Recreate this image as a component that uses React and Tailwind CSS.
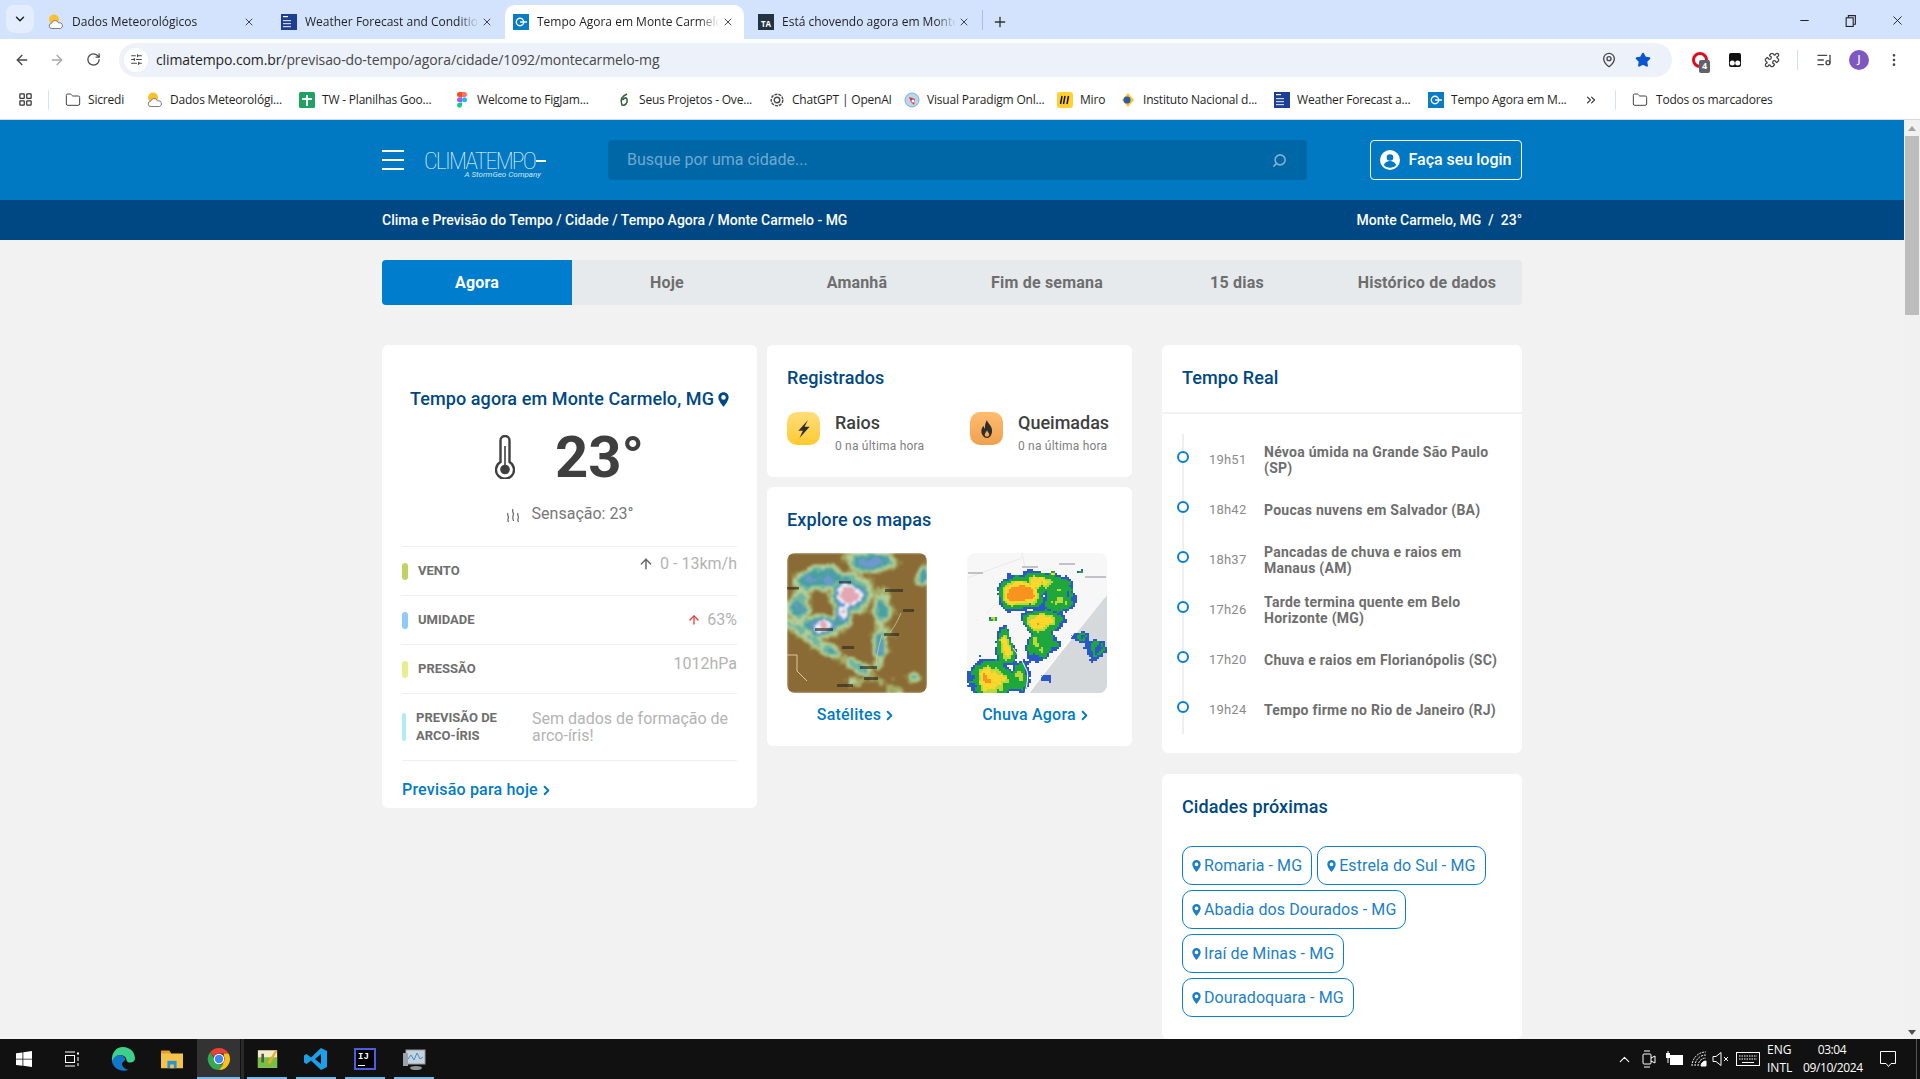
import React from "react";
import {
  ArrowLeft, ArrowRight, RotateCw, X, Plus, Minus, ChevronDown, ChevronRight, ChevronUp, LayoutGrid, Folder,
  ChevronsRight, MapPin, Star, Puzzle, ListMusic, EllipsisVertical, SlidersHorizontal, Search, ArrowUp,
} from "lucide-react";

/* ---------- map drawings ---------- */
function hash(x, y, s) {
  const v = Math.sin(x * 127.1 + y * 311.7 + s * 74.7) * 43758.5453;
  return v - Math.floor(v);
}
function smooth(x, y, s) {
  const xi = Math.floor(x), yi = Math.floor(y);
  const fx = x - xi, fy = y - yi;
  const u = fx * fx * (3 - 2 * fx), v = fy * fy * (3 - 2 * fy);
  const a = hash(xi, yi, s), b = hash(xi + 1, yi, s), c = hash(xi, yi + 1, s), d = hash(xi + 1, yi + 1, s);
  return a + (b - a) * u + (c - a) * v + (a - b - c + d) * u * v;
}
const fbm = (x, y, s) => 0.55 * smooth(x / 14, y / 14, s) + 0.3 * smooth(x / 7, y / 7, s + 1) + 0.15 * smooth(x / 3, y / 3, s + 2);
const gauss = (x, y, cx, cy, rx, ry, a) => a * Math.exp(-(((x - cx) / rx) ** 2 + ((y - cy) / ry) ** 2));

function satColor(v) {
  if (v < 0.3) return "#8a6a34";
  if (v < 0.38) return "#93803f";
  if (v < 0.47) return "#a5ac69";
  if (v < 0.58) return "#b4cd94";
  if (v < 0.68) return "#6fb7a0";
  if (v < 0.8) return "#4a9fa2";
  if (v < 0.92) return "#6f97cf";
  if (v < 1.06) return "#e8eef5";
  return "#e3a7b4";
}
const satCells = [];
for (let y = 0; y < 70; y++) {
  for (let x = 0; x < 70; x++) {
    const px = x * 2, py = y * 2;
    let v = 0;
    v = Math.max(v, gauss(px, py, 62, 42, 22, 24, 1.05));
    v = Math.max(v, gauss(px, py, 55, 62, 12, 18, 1.05));
    v = Math.max(v, gauss(px, py, 35, 72, 22, 14, 0.95));
    v = Math.max(v, gauss(px, py, 32, 25, 34, 16, 0.85));
    v = Math.max(v, gauss(px, py, 85, 8, 30, 12, 0.85));
    v = Math.max(v, gauss(px, py, 92, 60, 14, 26, 0.62));
    v = Math.max(v, gauss(px, py, 92, 95, 8, 26, 0.7));
    v = Math.max(v, gauss(px, py, 10, 50, 18, 26, 0.62));
    v = Math.max(v, gauss(px, py, 136, 22, 8, 12, 0.85));
    const d = (py - px * 0.62 - 70) / 10;
    v = Math.max(v, 0.52 * Math.exp(-d * d) * (px < 125 ? 1 : 0.6));
    const d2 = (py - 120 + px * 0.1 - 15) / 9;
    v = Math.max(v, 0.45 * Math.exp(-d2 * d2) * (px > 60 ? 1 : 0));
    v = v + (fbm(px, py, 3) - 0.5) * 0.75;
    satCells.push(<rect key={x + "-" + y} x={px} y={py} width="2.2" height="2.2" fill={satColor(v)} />);
  }
}
function radarColor(v) {
  if (v < 0.3) return null;
  if (v < 0.4) return "#2c57c9";
  if (v < 0.62) return "#1ea83c";
  if (v < 0.72) return "#b9d83a";
  if (v < 0.92) return "#ffd62b";
  return "#f7931e";
}
const radarCells = [];
for (let y = 0; y < 70; y++) {
  for (let x = 0; x < 70; x++) {
    const px = x * 2, py = y * 2;
    let v = 0;
    v = Math.max(v, gauss(px, py, 52, 40, 24, 16, 1.15));
    v = Math.max(v, gauss(px, py, 90, 42, 20, 22, 0.66));
    v = Math.max(v, gauss(px, py, 72, 30, 22, 13, 0.8));
    v = Math.max(v, gauss(px, py, 72, 68, 26, 14, 0.86));
    v = Math.max(v, gauss(px, py, 72, 90, 22, 18, 0.62));
    v = Math.max(v, gauss(px, py, 38, 92, 12, 20, 0.85));
    v = Math.max(v, gauss(px, py, 24, 125, 22, 20, 0.95));
    v = Math.max(v, gauss(px, py, 52, 122, 12, 18, 0.62));
    v = Math.max(v, gauss(px, py, 80, 125, 12, 10, 0.42));
    v = Math.max(v, gauss(px, py, 112, 82, 20, 8, 0.42));
    v = Math.max(v, gauss(px, py, 130, 95, 16, 14, 0.5));
    v = Math.max(v, gauss(px, py, 85, 20, 3, 3, 0.9));
    v = Math.max(v, gauss(px, py, 112, 18, 5, 3, 0.4));
    v = Math.max(v, gauss(px, py, 25, 65, 6, 3, 0.9));
    v = Math.max(v, gauss(px, py, 12, 100, 6, 8, 0.34));
    v -= gauss(px, py, 50, 80, 8, 12, 0.9);
    v -= gauss(px, py, 10, 60, 16, 30, 0.6);
    v += (fbm(px * 1.7, py * 1.7, 9) - 0.5) * 0.42;
    const sea = py > 140 - (px - 60) * 1.25;
    if (sea && v > 0.5) v = 0.38;
    const c = radarColor(v);
    if (c) radarCells.push(<rect key={x + "-" + y} x={px} y={py} width="2" height="2" fill={c} />);
  }
}

function SatelliteMap() {
  return (
    <svg viewBox="0 0 140 140" className="block h-[140px] w-[140px] rounded-lg">
      <filter id="satblur"><feGaussianBlur stdDeviation="0.9" /></filter>
      <g filter="url(#satblur)">{satCells}</g>
      <path d="M0 102 L10 102 L10 118 L20 128" fill="none" stroke="#e4c79a" strokeWidth="1" />
      <path d="M114 60 Q108 75 98 85 M95 82 Q88 105 90 112" fill="none" stroke="#d9d3a4" strokeWidth="1" opacity=".7" />
      <g fill="#2c2a20" opacity=".65">
        <rect x="52" y="28" width="12" height="2.5" />
        <rect x="98" y="36" width="18" height="3" />
        <rect x="116" y="56" width="11" height="3" />
        <rect x="28" y="75" width="18" height="3" />
        <rect x="97" y="80" width="15" height="3" />
        <rect x="55" y="93" width="12" height="3" />
        <rect x="73" y="113" width="17" height="3" />
        <rect x="77" y="124" width="14" height="3" />
        <rect x="50" y="131" width="16" height="3" />
        <rect x="0" y="34" width="12" height="2.5" />
      </g>
    </svg>
  );
}
function RadarMap() {
  return (
    <svg viewBox="0 0 140 140" className="block h-[140px] w-[140px] rounded-lg">
      <rect width="140" height="140" fill="#f8f7f7" />
      <path d="M140 42 L62 140 L140 140 Z" fill="#d5d9dc" />
      <path d="M0 25 L55 5 M55 0 L58 14 M20 60 L45 35" fill="none" stroke="#efe6e6" strokeWidth="1" />
      {radarCells}
      <path d="M46 95 Q55 105 60 118 Q62 125 58 140 M85 110 L110 76 M62 140 L100 90" fill="none" stroke="#fff" strokeWidth="1" />
      <g fill="#a9adb2" opacity=".7">
        <rect x="92" y="10" width="16" height="2" />
        <rect x="118" y="23" width="21" height="2" />
        <rect x="1" y="19" width="15" height="2" />
        <rect x="55" y="13" width="16" height="2" />
      </g>
    </svg>
  );
}

/* ---------- small icons ---------- */
const Pin = ({ className }) => (
  <svg viewBox="0 0 12 16" className={className} fill="currentColor">
    <path fillRule="evenodd" d="M6 0C2.7 0 .4 2.4.4 5.5.4 9 4 13.5 6 16c2-2.5 5.6-7 5.6-10.5C11.6 2.4 9.3 0 6 0zm0 3.2a2.5 2.5 0 1 1 0 5 2.5 2.5 0 0 1 0-5z" />
  </svg>
);
const Weather = ({ className = "h-4 w-4" }) => (
  <svg viewBox="0 0 16 16" className={className}>
    <rect width="16" height="16" fill="#1c3f94" />
    <rect x="2" y="2" width="5" height="1.2" fill="#fff" />
    <rect x="2" y="6" width="8" height="1.2" fill="#cdd6ee" />
    <rect x="2" y="9" width="8" height="1.2" fill="#cdd6ee" />
    <rect x="2" y="12" width="8" height="1.2" fill="#cdd6ee" />
  </svg>
);
const Climate = ({ className = "h-4 w-4" }) => (
  <svg viewBox="0 0 16 16" className={className}>
    <rect width="16" height="16" fill="#0a7cc4" />
    <circle cx="7" cy="8" r="3.7" fill="none" stroke="#fff" strokeWidth="1.4" />
    <path d="M7 8h7" stroke="#fff" strokeWidth="1.4" />
  </svg>
);
const SunCloud = () => (
  <svg viewBox="0 0 16 16" className="h-4 w-4">
    <circle cx="6" cy="5.5" r="5" fill="#fbc02d" />
    <path d="M4 14.5a2.6 2.6 0 0 1-.4-5.2 3.6 3.6 0 0 1 6.9-.4A2.9 2.9 0 0 1 12.500 14.500z" fill="#fff" stroke="#7d7d7d" strokeWidth="1" />
  </svg>
);
const TA = () => (
  <span className="flex h-4 w-4 items-center justify-center bg-[#243342] pt-1 text-[8px] font-bold leading-none text-white">TA</span>
);
const Sheets = () => (
  <svg viewBox="0 0 16 16" className="h-4 w-4">
    <rect width="16" height="16" rx="1.500" fill="#1ea362" />
    <path d="M7 3h2v3h4v2H9v6H7V8H3V6h4z" fill="#fff" />
  </svg>
);
const Figma = () => (
  <svg viewBox="0 0 10 16" className="h-4 w-[10px]">
    <path d="M5 0H2.500a2.500 2.500 0 0 0 0 5H5z" fill="#f24e1e" />
    <path d="M5 0h2.500a2.500 2.500 0 0 1 0 5H5z" fill="#ff7262" />
    <path d="M5 5.300H2.500a2.500 2.500 0 0 0 0 5H5z" fill="#a259ff" />
    <circle cx="7.500" cy="7.800" r="2.500" fill="#1abcfe" />
    <path d="M2.500 10.700H5v2.600a2.500 2.500 0 1 1-2.500-2.600z" fill="#0acf83" />
  </svg>
);
const Leaf = () => (
  <svg viewBox="0 0 16 16" className="h-4 w-4" fill="none" stroke="#35633a" strokeWidth="1.6">
    <path d="M11 2C6 4 4 8 6 13c3 1 6-2 5-6-1-2-3-1-4 1" />
  </svg>
);
const OpenAI = () => (
  <svg viewBox="0 0 16 16" className="h-4 w-4" fill="none" stroke="#4a4a4a" strokeWidth="1.4">
    <circle cx="8" cy="8" r="5.800" strokeDasharray="3 1" />
    <circle cx="8" cy="8" r="2.800" />
  </svg>
);
const Paradigm = () => (
  <svg viewBox="0 0 16 16" className="h-4 w-4">
    <circle cx="8" cy="8" r="7" fill="#b6d7ee" stroke="#8fa9c0" />
    <path d="M5 5l6 2-1 6-3-3z" fill="#d92f36" />
    <circle cx="9" cy="9" r="1.500" fill="#fff" />
  </svg>
);
const Miro = () => (
  <span className="flex h-4 w-4 items-center justify-center rounded-[3px] bg-[#ffd02f]">
    <svg viewBox="0 0 12 12" className="h-3 w-3" fill="none" stroke="#111" strokeWidth="1.500">
      <path d="M3 2L1.500 10M6 2L4.500 10M9.500 2L8 10" />
    </svg>
  </span>
);
const Inpe = () => (
  <svg viewBox="0 0 16 16" className="h-4 w-4">
    <path d="M8 1l6 7-6 7-6-7z" fill="#f4c531" />
    <circle cx="7" cy="8" r="3.500" fill="#2e5aa8" />
  </svg>
);
const Chrome = ({ className }) => (
  <svg viewBox="0 0 24 24" className={className}>
    <path d="M12 1a11 11 0 0 1 9.530 5.500H12a5.500 5.500 0 0 0-5.100 3.400L3.300 5A11 11 0 0 1 12 1z" fill="#e94235" />
    <path d="M21.530 6.500A11 11 0 0 1 12 23l4.770-8.250A5.500 5.500 0 0 0 16.800 9l-.1-2.500z" fill="#fbc116" />
    <path d="M12 23A11 11 0 0 1 3.300 5l4.500 7.800A5.500 5.500 0 0 0 12 17.500h4.700z" fill="#34a853" />
    <circle cx="12" cy="12" r="5.300" fill="#fff" />
    <circle cx="12" cy="12" r="4.200" fill="#4285f4" />
  </svg>
);

/* ---------- browser chrome ---------- */
const tabs = [
  { title: "Dados Meteorológicos", icon: <SunCloud />, cls: "w-[233px]" },
  { title: "Weather Forecast and Conditions", icon: <Weather />, cls: "w-[238px]" },
  { title: "Tempo Agora em Monte Carmelo", icon: <Climate />, cls: "w-[239px]", active: true },
  { title: "Está chovendo agora em Monte Carmelo", icon: <TA />, cls: "w-[238px]" },
];

function TabStrip() {
  return (
    <div className="flex h-[39px] shrink-0 items-end bg-[#d3e3fd] pl-[6px] font-['Open_Sans',sans-serif] text-[12px] text-[#1f1f1f]">
      <div className="mb-[6px] flex h-[28px] w-[28px] items-center justify-center rounded-lg bg-[#e4edfd]">
        <ChevronDown size={14} strokeWidth={2.5} />
      </div>
      <div className="flex">
        {tabs.map((t, i) => (
          <div key={i} className={`flex h-[34px] items-center ${t.cls} ${t.active ? "relative z-10 rounded-t-[10px] bg-white pl-2 pr-2" : "pl-[14px] pr-[10px]"} ${i === 0 ? "ml-0" : ""}`}>
            <span className="flex w-4 shrink-0 justify-center">{t.icon}</span>
            <span className="ml-2 flex-1 overflow-hidden whitespace-nowrap [mask-image:linear-gradient(90deg,#000_88%,transparent)]">{t.title}</span>
            <X size={12} strokeWidth={2} className="mx-[2px] shrink-0 text-[#444]" />
          </div>
        ))}
      </div>
      <div className="mb-[9px] mr-2 h-[20px] w-px bg-[#a8c0e8]" />
      <Plus size={16} className="mb-[9px] ml-[1px] text-[#333]" />
      <div className="ml-auto mb-[11px] flex items-center text-[#222]">
        <Minus size={13} className="mr-[33px]" />
        <svg viewBox="0 0 12 12" className="mr-[33px] h-[13px] w-[13px]" fill="none" stroke="currentColor"><rect x="2" y="3.500" width="6.500" height="8" /><path d="M4 3.500V1.500h6.500v8H8.500" /></svg>
        <X size={15} strokeWidth={1.5} className="mr-[15px]" />
      </div>
    </div>
  );
}

function Toolbar() {
  return (
    <div className="flex h-[41px] shrink-0 items-center rounded-tr-lg bg-white text-[#474747]">
      <ArrowLeft size={16} className="ml-[14px]" />
      <ArrowRight size={16} className="ml-[19px] text-[#a6a6a6]" />
      <RotateCw size={15} className="ml-[21px]" />
      <div className="ml-[18px] flex h-[34px] w-[1553px] items-center rounded-full bg-[#edf2fa] pl-[5px] pr-[21px]">
        <span className="flex h-6 w-6 items-center justify-center rounded-full bg-white">
          <SlidersHorizontal size={13} />
        </span>
        <span className="ml-[8px] flex-1 font-['Open_Sans',sans-serif] text-[14px] tracking-[-0.1px] text-[#1f1f1f]">
          climatempo.com.br<span className="text-[#474747]">/previsao-do-tempo/agora/cidade/1092/montecarmelo-mg</span>
        </span>
        <MapPin size={16} className="mr-[18px]" />
        <Star size={16} fill="#0b57d0" className="text-[#0b57d0]" />
      </div>
      <div className="relative ml-[20px] h-4 w-4 rounded-full border-[3px] border-[#e00b1c]">
        <span className="absolute left-[4px] top-[5px] flex h-[13px] w-[11px] items-center justify-center rounded-[2px] bg-[#5f6368] font-['Open_Sans',sans-serif] text-[9px] font-bold text-white">4</span>
      </div>
      <svg viewBox="0 0 16 16" className="ml-[19px] h-4 w-4"><path d="M2 3q0-2 2-2h8q2 0 2 2v10q0 2-2 2H4q-2 0-2-2z" fill="#111" /><circle cx="5.300" cy="11" r="2.500" fill="#fff" /><circle cx="10.700" cy="11" r="2.500" fill="#fff" /></svg>
      <Puzzle size={16} className="ml-[21px]" />
      <div className="ml-[17px] h-[20px] w-px bg-[#d5dfee]" />
      <ListMusic size={16} className="ml-[18px]" />
      <span className="ml-[17px] flex h-5 w-5 items-center justify-center rounded-full bg-[#7e57c2] font-['Open_Sans',sans-serif] text-[10px] font-semibold text-white">J</span>
      <EllipsisVertical size={16} className="ml-[17px]" />
    </div>
  );
}

const bookmarks = [
  { t: "Sicredi", i: <Folder size={16} strokeWidth={1.5} className="text-[#444]" />, c: "w-[82px]" },
  { t: "Dados Meteorológi...", i: <SunCloud />, c: "w-[152px]" },
  { t: "TW - Planilhas Goo...", i: <Sheets />, c: "w-[155px]" },
  { t: "Welcome to FigJam...", i: <Figma />, c: "w-[162px]" },
  { t: "Seus Projetos - Ove...", i: <Leaf />, c: "w-[153px]" },
  { t: "ChatGPT | OpenAI", i: <OpenAI />, c: "w-[135px]" },
  { t: "Visual Paradigm Onl...", i: <Paradigm />, c: "w-[153px]" },
  { t: "Miro", i: <Miro />, c: "w-[63px]" },
  { t: "Instituto Nacional d...", i: <Inpe />, c: "w-[154px]" },
  { t: "Weather Forecast a...", i: <Weather />, c: "w-[154px]" },
  { t: "Tempo Agora em M...", i: <Climate />, c: "w-[150px]" },
];

function Bookmarks() {
  return (
    <div className="flex h-[40px] shrink-0 items-center border-b border-[#d9d9d9] bg-white font-['Open_Sans',sans-serif] text-[12px] tracking-[-0.2px] text-[#1f1f1f]">
      <LayoutGrid size={15} className="ml-[18px] text-[#333]" />
      <div className="ml-[15px] h-[20px] w-px bg-[#d3e3fd]" />
      <div className="ml-[16px] flex">
        {bookmarks.map((b) => (
          <div key={b.t} className={`flex items-center gap-[7px] whitespace-nowrap ${b.c}`}>
            <span className="flex w-4 shrink-0 justify-center">{b.i}</span>
            <span>{b.t}</span>
          </div>
        ))}
      </div>
      <ChevronsRight size={14} className="ml-[6px] text-[#333]" />
      <div className="ml-[17px] h-[20px] w-px bg-[#d3e3fd]" />
      <Folder size={16} strokeWidth={1.5} className="ml-[16px] text-[#444]" />
      <span className="ml-[8px] whitespace-nowrap">Todos os marcadores</span>
    </div>
  );
}

/* ---------- site ---------- */
function SiteHeader() {
  return (
    <>
      <div className="flex h-20 shrink-0 justify-center bg-[#0079c2]">
        <div className="flex w-[1140px] items-center">
          <div className="flex h-5 w-[22px] flex-col justify-between">
            <span className="h-[2px] bg-white" /><span className="h-[2px] bg-white" /><span className="h-[2px] bg-white" />
          </div>
          <div className="relative ml-[20px] h-10 w-[122px] text-white">
            <span className="absolute left-0 top-[5px] whitespace-nowrap text-[24px] font-thin leading-[32px] tracking-[-1.8px] [font-stretch:75%]">CLIMATEMPO</span>
            <span className="absolute right-0 top-[20px] h-[2px] w-[10px] bg-white" />
            <span className="absolute right-[5px] top-[30px] whitespace-nowrap text-[8px] italic leading-[10px] text-[#cfe6f5]">A StormGeo Company</span>
          </div>
          <div className="ml-[62px] flex h-10 w-[699px] items-center rounded bg-[#0067a6] pl-[19px] pr-[20px]">
            <span className="flex-1 text-[16px] text-[#6fa9d0]">Busque por uma cidade...</span>
            <Search size={15} strokeWidth={2.500} className="-scale-x-100 text-[#7fb2d4]" />
          </div>
          <div className="ml-auto flex h-10 w-[152px] items-center justify-center gap-[8px] rounded border border-white text-[16px] font-medium text-white">
            <svg viewBox="0 0 20 20" className="h-5 w-5"><circle cx="10" cy="10" r="10" fill="#fff" /><circle cx="10" cy="7.500" r="3.300" fill="#0079c2" /><path d="M3.800 15c1.500-3 3.700-4 6.200-4s4.700 1 6.200 4c-3 3.600-9.400 3.600-12.400 0z" fill="#0079c2" /></svg>
            Faça seu login
          </div>
        </div>
      </div>
      <div className="flex h-10 shrink-0 justify-center bg-[#004883] text-[14px] font-medium text-white">
        <div className="flex w-[1140px] items-center justify-between">
          <span>Clima e Previsão do Tempo / Cidade / Tempo Agora / Monte Carmelo - MG</span>
          <span>Monte Carmelo, MG&nbsp; /&nbsp; 23°</span>
        </div>
      </div>
    </>
  );
}

const navs = ["Agora", "Hoje", "Amanhã", "Fim de semana", "15 dias", "Histórico de dados"];

const Title = ({ children, className = "" }) => (
  <h2 className={`text-[18px] font-medium leading-[24px] tracking-[0.1px] text-[#004883] ${className}`}>{children}</h2>
);

function Row({ color, label, children }) {
  return (
    <div className="flex h-[49px] items-center justify-between border-b border-[#efefef]">
      <div className="flex items-center">
        <span className={`h-[17px] w-[6px] rounded-[3px] ${color}`} />
        <span className="ml-[10px] text-[13px] font-bold text-[#6e6e6e]">{label}</span>
      </div>
      {children}
    </div>
  );
}

function NowCard() {
  return (
    <div className="h-[463px] w-[375px] shrink-0 rounded-md bg-white px-5">
      <Title className="mt-[21px] flex items-center justify-center gap-[4px] pt-[21px]">
        Tempo agora em Monte Carmelo, MG <Pin className="h-[15px] w-[11px] text-[#004883]" />
      </Title>
      <div className="mt-[16px] flex h-[60px] items-center justify-center">
        <svg viewBox="0 0 20 44" className="h-[44px] w-[20px]" fill="none" stroke="#3f3f3f" strokeWidth="2.400">
          <path d="M5.500 27V5.500a4.500 4.500 0 0 1 9 0V27a9 9 0 1 1-9 0z" />
          <circle cx="10" cy="34.500" r="4.800" fill="#3f3f3f" stroke="none" />
          <path d="M10 34V11" strokeWidth="1.600" />
        </svg>
        <span className="ml-[40px] text-[58px] font-bold leading-[60px] text-[#3f3f3f]">23°</span>
      </div>
      <div className="mt-[15px] flex h-6 items-center justify-center text-[16px] text-[#777]">
        <svg viewBox="0 0 14 18" className="mt-1 h-[18px] w-[14px]" fill="none" stroke="#666" strokeWidth="1.200">
          <path d="M2 6c-1.500 2 1.500 3 0 6-.5 1 0 2 .5 3M7 2c-1.500 3 1.500 4 0 7-.6 1.500 0 3 .6 5M12 6c-1.500 2 1.500 3 0 6-.5 1 0 2 .5 3" />
        </svg>
        <span className="ml-[12px]">Sensação: 23°</span>
      </div>
      <div className="mt-[20px] border-t border-[#efefef]">
        <Row color="bg-[#c4d261]" label="VENTO">
          <span className="mb-[14px] flex items-center gap-[6px] text-[16px] text-[#b3b3b3]"><ArrowUp size={16} strokeWidth={2.200} className="text-[#666]" />0 - 13km/h</span>
        </Row>
        <Row color="bg-[#90caf9]" label="UMIDADE">
          <span className="flex items-center gap-[6px] text-[16px] text-[#b3b3b3]"><ArrowUp size={14} strokeWidth={2.200} className="text-[#e53935]" />63%</span>
        </Row>
        <Row color="bg-[#e6ee8f]" label="PRESSÃO">
          <span className="mb-[10px] text-[16px] text-[#b3b3b3]">1012hPa</span>
        </Row>
        <div className="flex h-[67px] items-center border-b border-[#efefef]">
          <span className="h-[28px] w-[4px] rounded-[2px] bg-[#b2ebf2]" />
          <span className="ml-[10px] w-[116px] text-[13px] font-bold leading-[18px] text-[#6e6e6e]">PREVISÃO DE ARCO-ÍRIS</span>
          <span className="flex-1 text-[16px] leading-[17px] text-[#b3b3b3]">Sem dados de formação de arco-íris!</span>
        </div>
      </div>
      <a className="mt-[17px] flex items-center text-[16px] font-medium leading-6 tracking-[0.2px] text-[#007bc4]">
        Previsão para hoje <ChevronRight size={15} strokeWidth={3} className="ml-[1px]" />
      </a>
    </div>
  );
}

function Registered({ icon, grad, title, cls }) {
  return (
    <div className={`flex ${cls}`}>
      <span className={`mt-[1px] flex h-[33px] w-[33px] items-center justify-center rounded-[10px] bg-gradient-to-b ${grad}`}>{icon}</span>
      <div className="ml-[15px]">
        <div className="text-[18px] font-medium leading-[24px] text-[#3f3f3f]">{title}</div>
        <div className="mt-[3px] whitespace-nowrap text-[12px] leading-[16px] tracking-[0.2px] text-[#808080]">0 na última hora</div>
      </div>
    </div>
  );
}

function MiddleColumn() {
  return (
    <div className="ml-[10px] flex w-[365px] shrink-0 flex-col gap-[10px]">
      <div className="h-[132px] rounded-md bg-white px-5 pt-[21px]">
        <Title>Registrados</Title>
        <div className="mt-[21px] flex">
          <Registered
            cls="w-[183px]"
            title="Raios"
            grad="from-[#ffdd77] to-[#ffca28]"
            icon={<svg viewBox="0 0 16 16" className="h-[18px] w-[18px]" fill="#2d2d2d"><path d="M11.500 0L3 9.500h4L4 16l9-10H8.500z" /></svg>}
          />
          <Registered
            title="Queimadas"
            grad="from-[#ffbc70] to-[#efa04d]"
            icon={<svg viewBox="0 0 16 16" className="h-[18px] w-[18px]" fill="#2d2d2d"><path fillRule="evenodd" d="M8 0c.5 3 4.500 5 4.500 9.500C12.500 13 10.500 16 8 16s-5-2.500-5-6c0-2.300 1-3.800 2-4.800.1 1.300.5 2 1.200 2.500C6 5 6.500 2.500 8 0zm0 9c-.5 1.500-2 2.500-2 4 0 1 .9 1.800 2 1.800s2-.8 2-1.800c0-1.500-1.500-2.500-2-4z" /></svg>}
          />
        </div>
      </div>
      <div className="h-[259px] rounded-md bg-white px-5 pt-[21px]">
        <Title>Explore os mapas</Title>
        <div className="mt-[21px] flex justify-between pr-[5px]">
          {[["Satélites", <SatelliteMap key="s" />], ["Chuva Agora", <RadarMap key="r" />]].map(([label, map]) => (
            <div key={label} className="w-[140px]">
              {map}
              <a className="mt-[10px] flex items-center justify-center text-[16px] font-medium leading-6 tracking-[0.2px] text-[#007bc4]">
                {label} <ChevronRight size={15} strokeWidth={3} className="ml-[1px]" />
              </a>
            </div>
          ))}
        </div>
      </div>
    </div>
  );
}

const news = [
  ["19h51", "Névoa úmida na Grande São Paulo (SP)"],
  ["18h42", "Poucas nuvens em Salvador (BA)"],
  ["18h37", "Pancadas de chuva e raios em Manaus (AM)"],
  ["17h26", "Tarde termina quente em Belo Horizonte (MG)"],
  ["17h20", "Chuva e raios em Florianópolis (SC)"],
  ["19h24", "Tempo firme no Rio de Janeiro (RJ)"],
];
const cities = ["Romaria - MG", "Estrela do Sul - MG", "Abadia dos Dourados - MG", "Iraí de Minas - MG", "Douradoquara - MG"];

function RightColumn() {
  return (
    <div className="ml-[30px] flex w-[360px] shrink-0 flex-col gap-[21px]">
      <div className="h-[408px] rounded-md bg-white">
        <Title className="px-5 pt-[21px]">Tempo Real</Title>
        <div className="mt-[22px] h-[2px] bg-[#f2f2f2]" />
        <div className="relative mx-5 mt-[20px]">
          <span className="absolute left-0 top-0 h-[300px] w-[2px] bg-[#efefef]" />
          <ul className="py-[-1px] pt-[1px]">
            {news.map(([time, text]) => (
              <li key={time + text} className="relative flex h-[50px] items-center">
                <span className="absolute left-[-5px] top-[16px] h-3 w-3 rounded-full border-2 border-[#0a7fd1] bg-white" />
                <span className="ml-[27px] w-[55px] shrink-0 text-[13px] leading-[16px] tracking-[0.2px] text-[#8a8a8a]">{time}</span>
                <span className="w-[240px] text-[14px] font-bold leading-[16px] tracking-[0.25px] text-[#6e6e6e]">{text}</span>
              </li>
            ))}
          </ul>
        </div>
      </div>
      <div className="rounded-md bg-white px-5 pb-[22px] pt-[21px]">
        <Title>Cidades próximas</Title>
        <div className="mt-[27px] flex flex-wrap gap-x-[5px] gap-y-[5px]">
          {cities.map((c) => (
            <span key={c} className="flex h-[39px] items-center gap-[3px] rounded-[10px] border border-[#0a7fd1] px-[9px] text-[16px] tracking-[0.1px] text-[#1c80c8]">
              <Pin className="h-[14px] w-[9px]" />{c}
            </span>
          ))}
        </div>
      </div>
    </div>
  );
}

function Page() {
  return (
    <div className="flex min-h-0 flex-1">
      <div className="min-w-0 flex-1 overflow-hidden bg-[#f2f2f2]">
        <SiteHeader />
        <div className="mx-auto w-[1140px]">
          <div className="mt-5 grid h-[45px] grid-cols-6 overflow-hidden rounded bg-[#e6eaed] text-[16px] font-bold tracking-[0.2px] text-[#6e6e6e]">
            {navs.map((n, i) => (
              <div key={n} className={`flex items-center justify-center ${i === 0 ? "bg-[#007dcd] text-white" : ""}`}>{n}</div>
            ))}
          </div>
          <div className="mt-10 flex items-start">
            <NowCard />
            <MiddleColumn />
            <RightColumn />
          </div>
        </div>
      </div>
      <div className="flex w-4 shrink-0 flex-col items-center bg-[#f1f1f1]">
        <svg viewBox="0 0 8 5" className="mt-[6px] h-[5px] w-2"><path d="M4 0l4 5H0z" fill="#a3a3a3" /></svg>
        <div className="mt-[5px] h-[179px] w-[14px] bg-[#bdbdbd]" />
        <svg viewBox="0 0 8 5" className="mb-[4px] mt-auto h-[5px] w-2"><path d="M4 5l4-5H0z" fill="#505050" /></svg>
      </div>
    </div>
  );
}

/* ---------- taskbar ---------- */
function Taskbar() {
  const apps = [
    { w: "w-[40px]", i: <svg viewBox="0 0 24 24" className="h-6 w-[21px]"><rect x="1" y="2" width="22" height="20" fill="#f2ecc9" /><rect x="1" y="10" width="22" height="12" fill="#76c043" /><rect x="5" y="6" width="3" height="10" fill="#555" /><path d="M12 16L21 2l2 1-8 15z" fill="#f0a92f" /></svg> },
    { w: "w-[40px]", i: <svg viewBox="0 0 24 24" className="h-6 w-6"><path d="M17 1l6 3v16l-6 3-10-9.500L2.500 17 0 15.500v-7L2.500 7 7 10.500zM17 7l-6 5 6 5z" fill="#1c9fe8" /></svg> },
    { w: "w-[40px]", i: <span className="flex h-[22px] w-[22px] flex-col justify-between border-2 border-[#4b5ee0] bg-black p-[2px] font-['Liberation_Mono',monospace] text-[9px] font-bold leading-[10px] text-white">IJ<span className="block h-[1px] w-[7px] bg-white" /></span> },
    { w: "w-[40px]", i: <svg viewBox="0 0 24 24" className="h-6 w-6"><rect x="4" y="3" width="19" height="14" fill="#c7d3dc" stroke="#999" /><rect x="1" y="6" width="5" height="13" fill="#9aa3aa" /><path d="M6 12l3-4 3 5 3-7 3 6 3-2" stroke="#3a8fd1" fill="none" /><ellipse cx="14" cy="21" rx="6" ry="2" fill="#8d9499" /></svg> },
  ];
  return (
    <div className="flex h-10 shrink-0 items-center bg-[#111] font-['Open_Sans',sans-serif] text-[12px] text-white">
      <svg viewBox="0 0 16 16" className="ml-4 h-4 w-4" fill="#fff"><path d="M0 2.300l6.500-.9v6.300H0zM7.300 1.300L16 0v7.700H7.300zM0 8.500h6.500v6.300L0 13.900zM7.300 8.500H16V16l-8.700-1.200z" /></svg>
      <svg viewBox="0 0 16 16" className="ml-8 h-4 w-4" fill="none" stroke="#fff"><path d="M1 1h10M1 15h10" /><rect x="1.500" y="4.500" width="9" height="7" /><path d="M14 1.500v2" strokeWidth="2" /><path d="M14 6v4M14 12v3" /></svg>
      <svg viewBox="0 0 24 24" className="ml-[31px] h-6 w-6"><path d="M12 0c7 0 12 5 12 11.500 0 3-3 4.500-6 4-3-.5-2-3-3.500-5C13 8.500 9 7 6 9 3.500 10.500 2 13 1 15 0 6 5 0 12 0z" fill="#3bd18a" /><path d="M1 15c1-4 4-7 7.500-7S15 11 14 13c-1 2-3 2-3 4 0 3 4 6 7 5.500A12 12 0 0 1 1 15z" fill="#1277c9" /></svg>
      <svg viewBox="0 0 24 22" className="ml-[26px] h-[22px] w-[22px]"><path d="M0 2h9l2 3h13v16H0z" fill="#f6c34a" /><path d="M0 2h9l2 3H0z" fill="#e3a126" /><rect x="7" y="13" width="10" height="8" fill="#2a93d8" /><rect x="10" y="17" width="4" height="4" fill="#f6c34a" /></svg>
      <div className="relative ml-[14px] flex h-10 w-[43px] items-center justify-center bg-[#333] shadow-[inset_0_-2px_0_#76b9ed]">
        <Chrome className="h-6 w-6" />
      </div>
      <div className="ml-[1px] h-10 w-[3px] bg-[#2a2a2a]" />
      <div className="ml-[3px] flex gap-[9px]">
        {apps.map((a, idx) => (
          <div key={idx} className={`flex h-10 items-center justify-center shadow-[inset_0_-2px_0_#76b9ed] ${a.w}`}>{a.i}</div>
        ))}
      </div>
      <div className="ml-auto flex items-center">
        <ChevronUp size={17} strokeWidth={1.500} />
        <svg viewBox="0 0 16 18" className="ml-[8px] h-[18px] w-4" fill="none" stroke="#fff"><rect x="2" y="4" width="8" height="10" rx="1" /><path d="M10 8l4-2v7l-4-2M3 1h6M3 17h6" /></svg>
        <svg viewBox="0 0 18 16" className="ml-[8px] h-4 w-[18px]" fill="#fff"><rect x="5" y="4" width="13" height="10" /><rect x="1" y="2" width="4" height="5" /><path d="M3 0v2M3 7v5" stroke="#fff" /></svg>
        <svg viewBox="0 0 16 16" className="ml-[8px] h-4 w-4" fill="none" stroke="#fff"><path d="M1 15A14 14 0 0 1 15 1M4 15A11 11 0 0 1 15 4M7 15a8 8 0 0 1 8-8" strokeDasharray="2 1" /><path d="M10 15a5 5 0 0 1 5-5v5z" fill="#fff" /></svg>
        <svg viewBox="0 0 18 16" className="ml-[5px] h-4 w-[18px]" fill="none" stroke="#fff"><path d="M1 5.500h3L9 1.500v13l-5-4H1z" /><path d="M12 6l4 4M16 6l-4 4" /></svg>
        <svg viewBox="0 0 24 14" className="ml-[6px] h-[14px] w-6" fill="none" stroke="#fff"><rect x=".5" y=".5" width="23" height="13" /><path d="M3 4h18M3 7h18" strokeDasharray="1.500 1" /><path d="M6 10.500h12" /></svg>
        <div className="ml-[7px] w-[30px] text-[12px] leading-[18px]"><div>ENG</div><div>INTL</div></div>
        <div className="ml-[6px] w-[58px] text-center text-[12px] leading-[18px] tracking-[-0.4px]"><div>03:04</div><div>09/10/2024</div></div>
        <svg viewBox="0 0 16 16" className="ml-[19px] h-4 w-4" fill="none" stroke="#fff"><path d="M.5.500h15v12H11L8.500 15.500 6 12.500H.5z" /></svg>
        <div className="ml-[20px] h-10 w-px bg-[#555]" />
        <div className="w-[3px]" />
      </div>
    </div>
  );
}

export default function App() {
  return (
    <div className="flex h-[1079px] w-[1920px] flex-col overflow-hidden font-['Roboto',sans-serif]">
      <TabStrip />
      <Toolbar />
      <Bookmarks />
      <Page />
      <Taskbar />
    </div>
  );
}
